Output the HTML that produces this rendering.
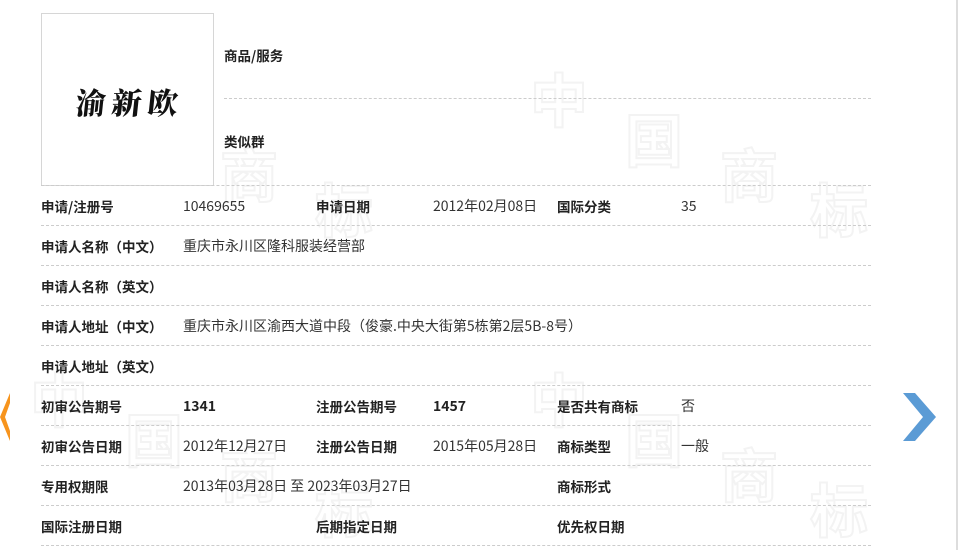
<!DOCTYPE html>
<html><head><meta charset="utf-8"><style>
body{margin:0;width:969px;height:550px;overflow:hidden;background:#fff;font-family:"Noto Sans CJK SC","Liberation Sans",sans-serif;font-size:14px;color:#333;position:relative}
.a{position:absolute;white-space:nowrap;line-height:20px}
.b{font-weight:bold;color:#222;font-size:13.5px}
.l{position:absolute;border-top:1px dashed #ccc;height:0}
.wm{position:absolute;font-size:58px;font-weight:bold;font-family:"Noto Sans CJK SC",sans-serif;-webkit-text-stroke:2px #f3f3f3;color:transparent}
</style></head><body>
<div class="wm" style="left:530px;top:55px">中</div>
<div class="wm" style="left:625px;top:95px">国</div>
<div class="wm" style="left:720px;top:130px">商</div>
<div class="wm" style="left:810px;top:165px">标</div>
<div class="wm" style="left:220px;top:130px">商</div>
<div class="wm" style="left:315px;top:165px">标</div>
<div class="wm" style="left:30px;top:355px">中</div>
<div class="wm" style="left:125px;top:395px">国</div>
<div class="wm" style="left:220px;top:430px">商</div>
<div class="wm" style="left:315px;top:465px">标</div>
<div class="wm" style="left:530px;top:355px">中</div>
<div class="wm" style="left:625px;top:395px">国</div>
<div class="wm" style="left:720px;top:430px">商</div>
<div class="wm" style="left:810px;top:465px">标</div>
<div style="position:absolute;left:956px;top:0;width:2px;height:550px;background:#ddd"></div>
<div style="position:absolute;left:41px;top:13px;width:171px;height:171px;border:1px solid #d6d6d6;background:#fff"></div>
<div class="a" style="left:76px;top:84px;line-height:34px;font-family:'Noto Serif CJK SC',serif;font-weight:900;font-size:30px;letter-spacing:6px;color:#111;transform:skewX(-6deg)">渝新欧</div>
<div class="a b" style="left:224px;top:45px">商品/服务</div>
<div class="a b" style="left:224px;top:131px">类似群</div>
<div class="l" style="left:224px;top:98px;width:647px"></div>
<div class="l" style="left:41px;top:185px;width:830px"></div>
<div class="l" style="left:41px;top:225px;width:830px"></div>
<div class="l" style="left:41px;top:265px;width:830px"></div>
<div class="l" style="left:41px;top:305px;width:830px"></div>
<div class="l" style="left:41px;top:345px;width:830px"></div>
<div class="l" style="left:41px;top:385px;width:830px"></div>
<div class="l" style="left:41px;top:425px;width:830px"></div>
<div class="l" style="left:41px;top:465px;width:830px"></div>
<div class="l" style="left:41px;top:505px;width:830px"></div>
<div class="l" style="left:41px;top:545px;width:830px"></div>
<div class="a b" style="left:41px;top:196px">申请/注册号</div><div class="a" style="left:183px;top:196px">10469655</div>
<div class="a b" style="left:316px;top:196px">申请日期</div><div class="a" style="left:433px;top:196px">2012年02月08日</div>
<div class="a b" style="left:557px;top:196px">国际分类</div><div class="a" style="left:681px;top:196px">35</div>
<div class="a b" style="left:41px;top:236px">申请人名称（中文）</div><div class="a" style="left:183px;top:236px">重庆市永川区隆科服装经营部</div>
<div class="a b" style="left:41px;top:276px">申请人名称（英文）</div>
<div class="a b" style="left:41px;top:316px">申请人地址（中文）</div><div class="a" style="left:183px;top:316px">重庆市永川区渝西大道中段（俊豪.中央大街第5栋第2层5B-8号）</div>
<div class="a b" style="left:41px;top:356px">申请人地址（英文）</div>
<div class="a b" style="left:41px;top:396px">初审公告期号</div><div class="a b" style="left:183px;top:396px;font-size:14px">1341</div>
<div class="a b" style="left:316px;top:396px">注册公告期号</div><div class="a b" style="left:433px;top:396px;font-size:14px">1457</div>
<div class="a b" style="left:557px;top:396px">是否共有商标</div><div class="a" style="left:681px;top:396px">否</div>
<div class="a b" style="left:41px;top:436px">初审公告日期</div><div class="a" style="left:183px;top:436px">2012年12月27日</div>
<div class="a b" style="left:316px;top:436px">注册公告日期</div><div class="a" style="left:433px;top:436px">2015年05月28日</div>
<div class="a b" style="left:557px;top:436px">商标类型</div><div class="a" style="left:681px;top:436px">一般</div>
<div class="a b" style="left:41px;top:476px">专用权期限</div><div class="a" style="left:183px;top:476px">2013年03月28日 至 2023年03月27日</div>
<div class="a b" style="left:557px;top:476px">商标形式</div>
<div class="a b" style="left:41px;top:516px">国际注册日期</div>
<div class="a b" style="left:316px;top:516px">后期指定日期</div>
<div class="a b" style="left:557px;top:516px">优先权日期</div>
<svg style="position:absolute;left:0;top:393px" width="10" height="48"><polygon points="10,0 0,24 10,48 10,38 5,24 10,10" fill="#f7941d"/></svg>
<svg style="position:absolute;left:903px;top:393px" width="34" height="48"><polygon points="0,0 12,0 33,24 12,48 0,48 20,24" fill="#5b9bd5"/></svg>
</body></html>
